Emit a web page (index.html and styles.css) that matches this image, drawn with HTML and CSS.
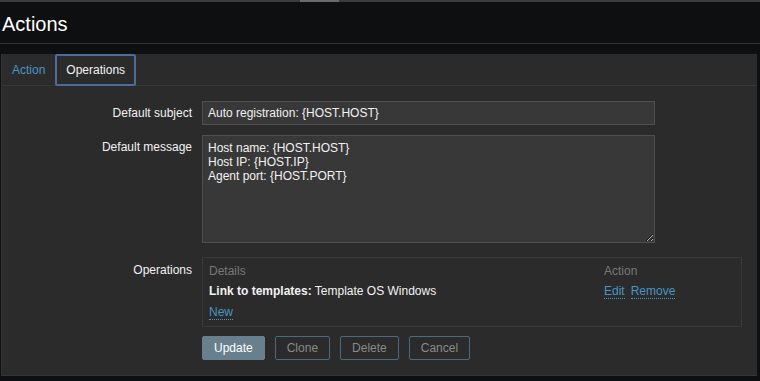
FILE: index.html
```html
<!DOCTYPE html>
<html lang="en">
<head>
  <meta charset="UTF-8">
  <meta name="viewport" content="width=device-width, initial-scale=1.0">
  <title>Actions</title>
  <link rel="stylesheet" href="styles.css">
</head>
<body>
  <div class="topbar"><span class="thumb"></span></div>

  <header class="page-header">
    <h1>Actions</h1>
  </header>

  <div class="panel">
    <ul class="tabs">
      <li class="tab"><a href="#">Action</a></li>
      <li class="tab active"><a href="#">Operations</a></li>
    </ul>

    <form class="form">
      <label class="form-label" for="subject">Default subject</label>
      <div class="form-field">
        <input type="text" id="subject" value="Auto registration: {HOST.HOST}">
      </div>

      <label class="form-label" for="message">Default message</label>
      <div class="form-field">
        <textarea id="message">Host name: {HOST.HOST}
Host IP: {HOST.IP}
Agent port: {HOST.PORT}</textarea>
      </div>

      <label class="form-label ops-label">Operations</label>
      <div class="form-field ops-field">
        <div class="ops-table">
          <div class="ops-row ops-head">
            <span>Details</span>
            <span>Action</span>
          </div>
          <div class="ops-row">
            <span><b>Link to templates:</b> Template OS Windows</span>
            <span class="ops-actions"><a href="#" class="link">Edit</a><a href="#" class="link">Remove</a></span>
          </div>
          <div class="ops-row">
            <span><a href="#" class="link">New</a></span>
          </div>
        </div>
      </div>

      <div class="form-buttons">
        <button type="button" class="btn primary">Update</button>
        <button type="button" class="btn">Clone</button>
        <button type="button" class="btn">Delete</button>
        <button type="button" class="btn">Cancel</button>
      </div>
    </form>
  </div>
</body>
</html>
```

FILE: styles.css
```css
body {
  margin: 0;
  background-color: #0e0f11;
  color: #f2f2f2;
  font-family: 'Liberation Sans', Arial, sans-serif;
  font-size: 12px;
  line-height: 14px;
}
.topbar {
  height: 2px;
  background-color: #3c3c3d;
  padding-left: 300px;
}
.thumb {
  display: block;
  width: 39px;
  height: 2px;
  background-color: #6b6b6b;
}
.page-header {
  height: 52px;
}
.page-header h1 {
  margin: 0;
  padding: 3px 0 0 2px;
  height: 38px;
  line-height: 38px;
  font-size: 20px;
  font-weight: normal;
  color: #ffffff;
  border-bottom: 1px solid #333436;
}
.panel {
  margin: 0 3px 0 1px;
  background-color: #2b2b2b;
  border-left: 1px solid #353535;
  border-bottom: 1px solid #353535;
  padding-bottom: 15px;
}
.tabs {
  list-style: none;
  margin: 0;
  padding: 0;
  display: flex;
  height: 31px;
  border-bottom: 1px solid #383838;
}
.tab a {
  display: block;
  padding: 0 8px;
  line-height: 28px;
  border: 2px solid transparent;
  color: #4796c4;
  text-decoration: none;
}
.tab.active a {
  padding: 0 9px;
  color: #f2f2f2;
  border-color: #4c6b9b;
  border-radius: 2px;
}
.form {
  display: grid;
  grid-template-columns: 190px 540px;
  column-gap: 10px;
  row-gap: 10px;
  padding-top: 15px;
}
.form-label {
  text-align: right;
  padding-top: 5px;
}
.form-field input,
.form-field textarea {
  box-sizing: border-box;
  width: 453px;
  background-color: #383838;
  border: 1px solid #4f4f4f;
  color: #f2f2f2;
  font-family: inherit;
  font-size: 12px;
  line-height: 14px;
  margin: 0;
  outline: none;
}
.form-field input {
  height: 24px;
  padding: 0 5px;
}
.form-field textarea {
  display: block;
  height: 108px;
  padding: 5px 5px;
  resize: vertical;
}
.ops-label,
.ops-field {
  margin-top: 4px;
}
.ops-label {
  padding-top: 6px;
}
.ops-table {
  border: 1px solid #383838;
  padding: 3px 6px 4px;
}
.ops-row {
  display: grid;
  grid-template-columns: 1fr 131px;
  padding: 3px 0;
}
.ops-head {
  color: #787878;
}
.ops-actions {
  display: flex;
  gap: 6px;
}
.link {
  color: #4796c4;
  text-decoration: none;
  border-bottom: 1px dotted #4796c4;
}
.form-buttons {
  grid-column: 2;
  display: flex;
  gap: 10px;
  margin-top: -1px;
}
.btn {
  height: 24px;
  padding: 0 11px;
  background-color: transparent;
  border: 1px solid #4b6a7d;
  border-radius: 2px;
  color: #8a8a8a;
  font-family: inherit;
  font-size: 12px;
  line-height: 22px;
  cursor: pointer;
}
.btn.primary {
  background-color: #687f8e;
  border-color: #687f8e;
  color: #ffffff;
}
```
